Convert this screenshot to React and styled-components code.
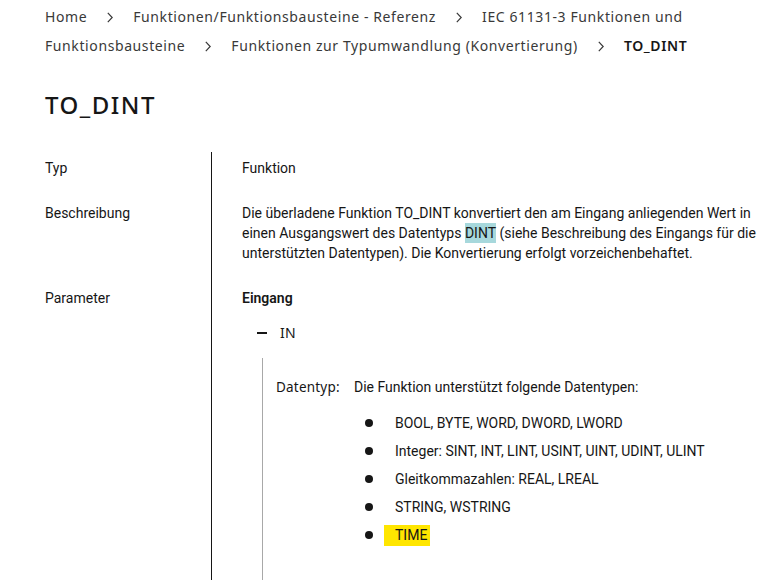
import React from "react";
import styled, { createGlobalStyle } from "styled-components";

const GlobalStyle = createGlobalStyle`
  html, body {
    margin: 0;
    padding: 0;
    background: #ffffff;
  }
  body {
    font-family: Roboto, "Liberation Sans", sans-serif;
    color: #161616;
  }
`;

const Page = styled.main`
  padding: 2px 6px 0 45px;
  width: 773px;
  height: 580px;
  box-sizing: border-box;
  overflow: hidden;
`;

const Breadcrumb = styled.nav`
  font-family: "Noto Sans", "Open Sans", sans-serif;
  font-size: 14px;
  line-height: 29px;
  letter-spacing: 0.6px;
  color: #393939;
`;

const Crumb = styled.span`
  font-weight: ${(p) => (p.$current ? 600 : 400)};
  color: ${(p) => (p.$current ? "#161616" : "#393939")};
`;

const Sep = styled.svg`
  width: 6px;
  height: 11px;
  margin: 0 20px 0 20px;
  vertical-align: -1px;
`;

const Chevron = () => (
  <Sep viewBox="0 0 6 11" aria-hidden="true">
    <path d="M0.8 0.8 L5.2 5.5 L0.8 10.2" fill="none" stroke="#393939" strokeWidth="1.2" />
  </Sep>
);

const Title = styled.h1`
  margin: 29px 0 31px;
  font-family: "Noto Sans", "Open Sans", sans-serif;
  font-size: 24px;
  line-height: 32px;
  font-weight: 500;
  letter-spacing: 1.5px;
  color: #161616;
`;

const Table = styled.div`
  display: grid;
  grid-template-columns: 167px 1fr;
  font-size: 14px;
  line-height: 20px;
`;

const Label = styled.div`
  padding: 6px 0 19px;
  border-right: 1px solid #161616;
`;

const Value = styled.div`
  padding: 6px 0 19px 30px;
`;

const Mark = styled.span`
  background: ${(p) => p.$color};
  padding: ${(p) => p.$pad || "0"};
  display: inline-block;
  line-height: ${(p) => p.$lh || "20px"};
`;

const SubHead = styled.div`
  font-weight: 600;
`;

const ParamName = styled.div`
  display: flex;
  align-items: center;
  gap: 13px;
  margin: 15px 0 15px 15px;
  font-family: "Noto Sans", sans-serif;
  letter-spacing: 0.3px;
`;

const Dash = styled.span`
  width: 10px;
  height: 2px;
  background: #161616;
`;

const ParamBody = styled.div`
  margin-left: 20px;
  border-left: 1px solid #a8a8a8;
  padding: 19px 0 60px 13px;
`;

const DefRow = styled.div`
  display: grid;
  grid-template-columns: 78px 1fr;
`;

const DefLabel = styled.div`
  font-family: "Noto Sans", sans-serif;
  letter-spacing: 0.2px;
  font-size: 13.5px;
`;

const List = styled.ul`
  list-style: none;
  margin: 12px 0 0;
  padding: 0;
`;

const Item = styled.li`
  display: flex;
  align-items: center;
  height: 28px;
  &::before {
    content: "";
    width: 8px;
    height: 8px;
    border-radius: 50%;
    background: #161616;
    margin: 0 ${(p) => (p.$marked ? "11px" : "22px")} 0 11px;
    flex: none;
  }
`;

const types = [
  "BOOL, BYTE, WORD, DWORD, LWORD",
  "Integer: SINT, INT, LINT, USINT, UINT, UDINT, ULINT",
  "Gleitkommazahlen: REAL, LREAL",
  "STRING, WSTRING",
];

export default function App() {
  return (
    <>
      <GlobalStyle />
      <Page>
        <Breadcrumb>
          <Crumb>Home</Crumb>
          <Chevron />
          <Crumb>Funktionen/Funktionsbausteine - Referenz</Crumb>
          <Chevron />
          <Crumb>IEC 61131-3 Funktionen und Funktionsbausteine</Crumb>
          <Chevron />
          <Crumb>Funktionen zur Typumwandlung (Konvertierung)</Crumb>
          <Chevron />
          <Crumb $current>TO_DINT</Crumb>
        </Breadcrumb>
        <Title>TO_DINT</Title>
        <Table>
          <Label>Typ</Label>
          <Value>Funktion</Value>
          <Label>Beschreibung</Label>
          <Value>
            Die überladene Funktion TO_DINT konvertiert den am Eingang
            anliegenden Wert in einen Ausgangswert des Datentyps{" "}
            <Mark $color="#a7d8dc">DINT</Mark> (siehe Beschreibung des
            Eingangs für die unterstützten Datentypen). Die Konvertierung
            erfolgt vorzeichenbehaftet.
          </Value>
          <Label>Parameter</Label>
          <Value>
            <SubHead>Eingang</SubHead>
            <ParamName>
              <Dash />
              IN
            </ParamName>
            <ParamBody>
              <DefRow>
                <DefLabel>Datentyp:</DefLabel>
                <div>
                  Die Funktion unterstützt folgende Datentypen:
                  <List>
                    {types.map((t) => (
                      <Item key={t}>{t}</Item>
                    ))}
                    <Item $marked>
                      <Mark $color="#ffe600" $pad="0 3px 0 11px" $lh="21px">
                        TIME
                      </Mark>
                    </Item>
                  </List>
                </div>
              </DefRow>
            </ParamBody>
          </Value>
        </Table>
      </Page>
    </>
  );
}
